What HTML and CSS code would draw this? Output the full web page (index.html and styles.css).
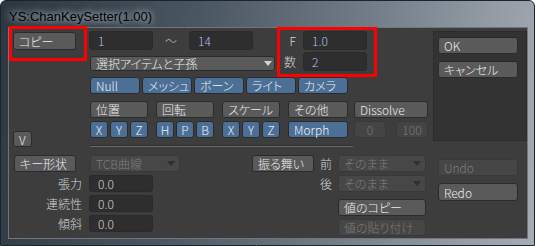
FILE: index.html
```html
<!DOCTYPE html>
<html lang="ja">
  <head>
    <meta charset="UTF-8" />
    <meta name="viewport" content="width=device-width, initial-scale=1.0" />
    <title>YS:ChanKeySetter(1.00)</title>
    <link rel="stylesheet" href="styles.css">
  </head>
  <body>
    <div class="window">
      <div class="titlebar">YS:ChanKeySetter(1.00)</div>

      <div class="client">
        <div class="top">
          <div class="left-col">
            <button class="btn copy-btn">コピー</button>
            <button class="btn v-btn">V</button>
          </div>

          <div class="mid-col">
            <div class="range-area">
              <div class="range-left">
                <div class="range-row">
                  <div class="field w64 blue">1</div>
                  <span class="tilde">〜</span>
                  <div class="field w64 blue">14</div>
                </div>
                <div class="dropdown select-target">
                  <span>選択アイテムと子孫</span>
                  <i class="arrow light"></i>
                </div>
              </div>

              <div class="fgroup">
                <label class="flabel">F</label>
                <div class="field w64 blue">1.0</div>
                <label class="flabel">数</label>
                <div class="field w64 blue">2</div>
              </div>
            </div>

            <div class="type-row">
              <button class="btn blue-btn">Null</button>
              <button class="btn blue-btn">メッシュ</button>
              <button class="btn blue-btn">ボーン</button>
              <button class="btn blue-btn">ライト</button>
              <button class="btn blue-btn">カメラ</button>
            </div>

            <div class="channel-row">
              <div class="group">
                <button class="btn head">位置</button>
                <div class="axes">
                  <button class="btn blue-btn axis">X</button>
                  <button class="btn blue-btn axis">Y</button>
                  <button class="btn blue-btn axis">Z</button>
                </div>
              </div>
              <div class="group">
                <button class="btn head">回転</button>
                <div class="axes">
                  <button class="btn blue-btn axis">H</button>
                  <button class="btn blue-btn axis">P</button>
                  <button class="btn blue-btn axis">B</button>
                </div>
              </div>
              <div class="group">
                <button class="btn head">スケール</button>
                <div class="axes">
                  <button class="btn blue-btn axis">X</button>
                  <button class="btn blue-btn axis">Y</button>
                  <button class="btn blue-btn axis">Z</button>
                </div>
              </div>
              <div class="group other">
                <button class="btn head">その他</button>
                <button class="btn blue-btn">Morph</button>
              </div>
              <div class="group dissolve">
                <button class="btn head">Dissolve</button>
                <div class="axes spread">
                  <div class="field small disabled">0</div>
                  <div class="field small disabled">100</div>
                </div>
              </div>
            </div>

            <div class="separator"></div>
          </div>

          <div class="panel">
            <button class="btn wide">OK</button>
            <button class="btn wide">キャンセル</button>
          </div>
        </div>

        <div class="bottom">
          <div class="shape-grid">
            <button class="btn shape-btn">キー形状</button>
            <div class="dropdown tcb disabled">
              <span>TCB曲線</span>
              <i class="arrow dark"></i>
            </div>
            <label class="rlabel">張力</label>
            <div class="field w64">0.0</div>
            <label class="rlabel">連続性</label>
            <div class="field w64">0.0</div>
            <label class="rlabel">傾斜</label>
            <div class="field w64">0.0</div>
          </div>

          <div class="behave-grid">
            <button class="btn behave-btn">振る舞い</button>
            <label class="clabel">前</label>
            <div class="dropdown disabled">
              <span>そのまま</span>
              <i class="arrow dark"></i>
            </div>
            <span></span>
            <label class="clabel">後</label>
            <div class="dropdown disabled">
              <span>そのまま</span>
              <i class="arrow dark"></i>
            </div>
            <span></span>
            <span></span>
            <button class="btn value-copy">値のコピー</button>
            <span></span>
            <span></span>
            <button class="btn disabled value-paste">値の貼り付け</button>
          </div>

          <div class="undo-col">
            <button class="btn wide disabled">Undo</button>
            <button class="btn wide redo">Redo</button>
          </div>
        </div>

        <div class="mark mark-copy"></div>
        <div class="mark mark-f"></div>
      </div>
    </div>
  </body>
</html>
```

FILE: styles.css
```css
* {
  box-sizing: border-box;
}
body {
  margin: 0;
  background: #ffffff;
  font-family: "Liberation Sans", "Noto Sans CJK JP", sans-serif;
}
.window {
  width: 535px;
  height: 246px;
  display: flex;
  flex-direction: column;
  border: 1px solid #1b232b;
  border-radius: 6px 6px 0 0;
  background: linear-gradient(100deg, #2c3742 0%, #4a5661 35%, #727d88 65%, #929ba4 85%, #a4adb5 100%);
}
.titlebar {
  height: 28px;
  padding: 8px 0 0 8px;
  font-size: 13px;
  color: #000000;
  text-shadow: 0 0 6px rgba(215, 222, 230, 0.9), 0 0 10px rgba(190, 200, 210, 0.6);
}
.client {
  position: relative;
  flex: 1;
  margin: 0 6px 6px 7px;
  padding: 3px 0 0 4px;
  background: #3d3d3d;
  border: 1px solid #70767c;
  font-family: "Noto Sans CJK JP", sans-serif;
  font-size: 12px;
  font-weight: 300;
  font-feature-settings: "palt";
  color: #e4e4e4;
}

/* generic controls */
.btn {
  display: block;
  height: 17px;
  margin: 0;
  padding: 0 5px;
  font: inherit;
  line-height: 15px;
  text-align: left;
  color: #ececec;
  background: #5a5a5a;
  border: 1px solid #2b2b2b;
  border-radius: 3px;
  white-space: nowrap;
}
.blue-btn {
  background: #4b6f97;
  color: #f2f2f2;
}
.btn.disabled {
  background: #464646;
  border-color: #393939;
  color: #7c7c7c;
}
.field {
  height: 19px;
  padding: 0 8px;
  line-height: 17px;
  background: #2e2e2e;
  border: 1px solid #2a2a2a;
  border-radius: 3px;
  color: #d6d6d6;
}
.field.blue {
  color: #aac3f7;
}
.w64 {
  width: 64px;
}
.field.small {
  width: 32px;
  height: 17px;
  line-height: 15px;
  padding: 0;
  text-align: center;
}
.field.disabled {
  background: #444444;
  border-color: #393939;
  color: #7a7a7a;
}
.dropdown {
  display: flex;
  align-items: center;
  justify-content: space-between;
  height: 17px;
  padding: 0 4px 0 5px;
  background: #5a5a5a;
  border: 1px solid #2b2b2b;
  border-radius: 3px;
  color: #ececec;
  white-space: nowrap;
}
.dropdown.disabled {
  background: #474747;
  border-color: #393939;
  color: #7e7e7e;
}
.arrow {
  width: 0;
  height: 0;
  border-left: 4px solid transparent;
  border-right: 4px solid transparent;
  border-top: 5px solid #d4d4d4;
}
.arrow.dark {
  border-top-color: #2f2f2f;
}

/* top area */
.top {
  display: flex;
}
.left-col {
  width: 63px;
  padding-top: 1px;
}
.copy-btn {
  width: 63px;
  height: 18px;
}
.v-btn {
  width: 19px;
  height: 16px;
  margin-top: 81px;
  padding: 0 5px;
}
.mid-col {
  width: 339px;
  margin-left: 13px;
}
.range-area {
  display: flex;
}
.range-left {
  width: 188px;
}
.range-row {
  display: flex;
  align-items: center;
}
.tilde {
  width: 36px;
  text-align: center;
  color: #b8b8b8;
}
.select-target {
  width: 185px;
  height: 15px;
  margin: 6px 0 0 1px;
  padding-right: 2px;
}
.fgroup {
  display: grid;
  grid-template-columns: 26px 64px;
  row-gap: 2px;
}
.flabel {
  padding-right: 7px;
  text-align: right;
  line-height: 19px;
  color: #d8d8d8;
}
.type-row {
  display: flex;
  gap: 2px;
  margin: 6px 0 0 1px;
}
.type-row .btn {
  width: 50px;
}
.channel-row {
  display: flex;
  gap: 8px;
  margin: 7px 0 0 1px;
}
.group {
  width: 58px;
}
.group .btn {
  width: 100%;
}
.group.other {
  width: 60px;
  margin-right: -2px;
}
.group.dissolve {
  width: 74px;
}
.head {
  margin-bottom: 3px;
}
.axes {
  display: flex;
  gap: 2px;
}
.axes.spread {
  justify-content: space-between;
}
.group .axis {
  width: 18px;
  padding: 0;
  text-align: center;
}
.separator {
  width: 263px;
  height: 2px;
  margin: 7px 0 0 1px;
  border-top: 1px solid #2e2e2e;
  border-bottom: 1px solid #6b6b6b;
}
.panel {
  width: 94px;
  height: 110px;
  margin-left: auto;
  padding: 5px 4px;
  background: #333333;
  border: 1px solid #2c2c2c;
}
.wide {
  width: 80px;
  margin-bottom: 7px;
}

/* bottom area */
.bottom {
  display: flex;
  margin-top: 8px;
}
.shape-grid {
  display: grid;
  grid-template-columns: 70px 91px;
  grid-auto-rows: 17px;
  column-gap: 6px;
  row-gap: 3px;
}
.shape-btn {
  width: 62px;
  margin-left: 1px;
}
.tcb {
  width: 90px;
  margin-left: 1px;
}
.shape-grid .field {
  height: 17px;
  line-height: 15px;
}
.rlabel {
  padding-right: 1px;
  text-align: right;
  line-height: 17px;
  color: #d4d4d4;
}
.behave-grid {
  display: grid;
  grid-template-columns: 62px 24px 88px;
  grid-template-rows: 17px 17px 21px 19px;
  row-gap: 3px;
  margin-left: 72px;
}
.behave-btn {
  width: 62px;
}
.clabel {
  text-align: center;
  line-height: 17px;
  color: #d4d4d4;
}
.value-copy {
  width: 88px;
  margin-top: 4px;
}
.value-paste {
  width: 88px;
}
.undo-col {
  margin-left: 12px;
  padding-top: 4px;
}
.redo {
  height: 18px;
}

/* red annotation frames */
.mark {
  position: absolute;
  border: 3px solid #ff0000;
}
.mark-copy {
  left: 0;
  top: -2px;
  width: 78px;
  height: 35px;
}
.mark-f {
  left: 268px;
  top: -1px;
  width: 100px;
  height: 50px;
}
```
